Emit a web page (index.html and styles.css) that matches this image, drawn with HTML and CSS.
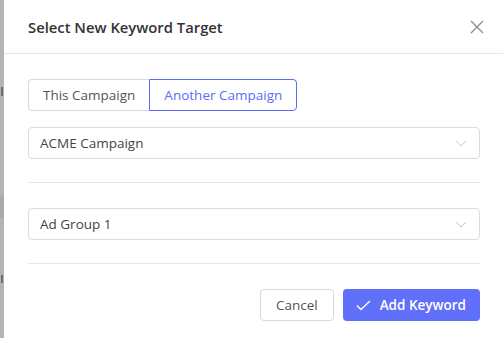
FILE: index.html
```html
<!DOCTYPE html>
<html>
<head>
    <title>Select New Keyword Target</title>
    <link rel="stylesheet" href="styles.css">
</head>
<body>
    <div class="backdrop">
        <span class="peek peek-top"></span>
        <span class="peek-band"></span>
        <span class="peek peek-bottom"></span>
    </div>
    <div class="modal">
        <div class="modal-header">
            <h2 class="modal-title">Select New Keyword Target</h2>
            <button class="close-btn" aria-label="Close">
                <svg width="14" height="14" viewBox="0 0 14 14">
                    <path d="M1 1 L13 13 M13 1 L1 13" stroke="#8a8a8a" stroke-width="1.3" fill="none"/>
                </svg>
            </button>
        </div>
        <div class="modal-body">
            <div class="toggle">
                <button class="toggle-btn">This Campaign</button>
                <button class="toggle-btn active">Another Campaign</button>
            </div>
            <div class="select">
                <span>ACME Campaign</span>
                <svg class="chevron" width="12" height="7" viewBox="0 0 12 7">
                    <path d="M1 1 L6 6 L11 1" stroke="#c4c4c4" stroke-width="1" fill="none"/>
                </svg>
            </div>
            <hr class="divider">
            <div class="select">
                <span>Ad Group 1</span>
                <svg class="chevron" width="12" height="7" viewBox="0 0 12 7">
                    <path d="M1 1 L6 6 L11 1" stroke="#c4c4c4" stroke-width="1" fill="none"/>
                </svg>
            </div>
            <hr class="divider">
            <div class="actions">
                <button class="btn btn-cancel">Cancel</button>
                <button class="btn btn-primary">
                    <svg width="15" height="11" viewBox="0 0 15 11">
                        <path d="M1 5.5 L5 9.5 L14 1" stroke="#ffffff" stroke-width="1.4" fill="none"/>
                    </svg>
                    Add Keyword
                </button>
            </div>
        </div>
    </div>
</body>
</html>
```

FILE: styles.css
```css
body {
    margin: 0;
    height: 338px;
    display: flex;
    background-color: #b4b4b4;
    font-family: "Open Sans", "Lato", sans-serif;
    overflow: hidden;
}
.backdrop {
    width: 4px;
    display: flex;
    flex-direction: column;
    overflow: hidden;
}
.peek {
    display: block;
    width: 2px;
    height: 9px;
    background-color: #6e6e6e;
    margin-left: 1px;
}
.peek-top {
    margin-top: 87px;
}
.peek-band {
    display: block;
    height: 22px;
    margin-top: 100px;
    background-color: #a7aab0;
}
.peek-bottom {
    margin-top: 57px;
    height: 8px;
}
.modal {
    flex: 1;
    background-color: #ffffff;
}
.modal-header {
    height: 53px;
    display: flex;
    align-items: center;
    justify-content: space-between;
    padding: 0 19px 0 24px;
    border-bottom: 1px solid #e6e6e6;
}
.modal-title {
    margin: 0;
    font-size: 14.8px;
    font-weight: 600;
    color: #333333;
}
.close-btn {
    background: none;
    border: none;
    padding: 0;
    display: flex;
    cursor: pointer;
}
.modal-body {
    padding: 25px 23px 0 24px;
}
.toggle {
    display: flex;
}
.toggle-btn {
    height: 32px;
    padding: 0 14px;
    font-family: inherit;
    font-size: 13.5px;
    color: #555555;
    background-color: #ffffff;
    border: 1px solid #d9d9d9;
    cursor: pointer;
}
.toggle-btn:first-child {
    border-radius: 4px 0 0 4px;
    border-right: none;
}
.toggle-btn:last-child {
    border-radius: 0 4px 4px 0;
}
.toggle-btn.active {
    color: #5b6cf9;
    border-color: #5b6cf9;
}
.select {
    margin-top: 16px;
    height: 30px;
    padding: 0 12px 0 11px;
    display: flex;
    align-items: center;
    justify-content: space-between;
    border: 1px solid #dcdcdc;
    border-radius: 4px;
    font-size: 13.5px;
    color: #444444;
}
.divider {
    margin: 23px 0 25px;
    border: none;
    border-top: 1px solid #e6e6e6;
}
.actions {
    display: flex;
    justify-content: flex-end;
    gap: 9px;
}
.btn {
    height: 32px;
    font-family: inherit;
    font-size: 13.5px;
    border-radius: 4px;
    cursor: pointer;
    display: flex;
    align-items: center;
}
.btn-cancel {
    padding: 0 15px;
    color: #555555;
    background-color: #ffffff;
    border: 1px solid #d9d9d9;
}
.btn-primary {
    padding: 0 14px 0 13px;
    gap: 9px;
    color: #ffffff;
    background-color: #6070fa;
    border: none;
    font-weight: 600;
}
```
